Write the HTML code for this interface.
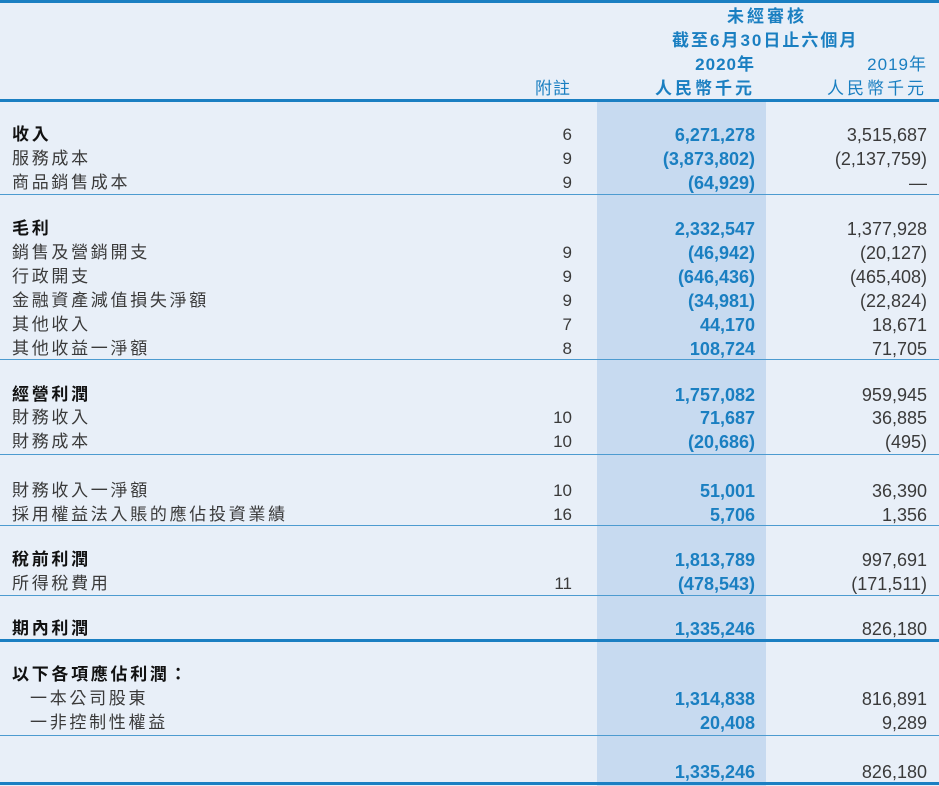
<!DOCTYPE html>
<html><head><meta charset="utf-8"><style>
*{margin:0;padding:0}
body{width:939px;height:786px;background:#e8eff8;position:relative;overflow:hidden;font-family:"Liberation Sans","Noto Sans CJK TC",sans-serif;}
.hl{position:absolute;left:597px;top:102px;width:169px;height:684px;background:#c7daf0}
.ln{position:absolute;left:0;width:939px;background:#1b7fc2}
.t{position:absolute;font-size:17px;line-height:20px;white-space:nowrap;color:#3a3a3a;top:0}
.lab{left:12px;letter-spacing:2.7px}
.b{font-weight:bold;color:#111}
.n{right:367px;text-align:right}
.a{right:184px;text-align:right;font-weight:bold;color:#1a7fc1;font-size:18px}
.c{right:12px;text-align:right;font-size:18px}
.h{color:#1a7fc1;letter-spacing:1px}
</style></head><body>
<div class="hl"></div>
<div class="ln" style="top:0;height:3px"></div>
<div class="ln" style="top:99px;height:3px"></div>
<div class="ln" style="top:194px;height:1px;background:#4d9bd0"></div>
<div class="ln" style="top:359px;height:1px;background:#4d9bd0"></div>
<div class="ln" style="top:454px;height:1px;background:#4d9bd0"></div>
<div class="ln" style="top:525px;height:1px;background:#4d9bd0"></div>
<div class="ln" style="top:595px;height:1px;background:#4d9bd0"></div>
<div class="ln" style="top:639px;height:3px"></div>
<div class="ln" style="top:735px;height:1px;background:#4d9bd0"></div>
<div class="ln" style="top:782px;height:3px"></div>

<div class="t h b" style="left:727px;top:7px;color:#1a7fc1;letter-spacing:3px">未經審核</div>
<div class="t h b" style="left:672px;top:31px;color:#1a7fc1;letter-spacing:2px">截至6月30日止六個月</div>
<div class="t h b" style="right:184px;top:55px;color:#1a7fc1">2020年</div>
<div class="t h" style="right:12px;top:55px">2019年</div>
<div class="t h" style="left:535px;top:79px">附註</div>
<div class="t h b" style="right:184px;top:79px;color:#1a7fc1;letter-spacing:3px">人民幣千元</div>
<div class="t h" style="right:12px;top:79px;letter-spacing:3px">人民幣千元</div>

<div class="t lab b" style="top:125px">收入</div><div class="t n" style="top:125px">6</div><div class="t a" style="top:125px">6,271,278</div><div class="t c" style="top:125px">3,515,687</div>
<div class="t lab" style="top:149px">服務成本</div><div class="t n" style="top:149px">9</div><div class="t a" style="top:149px">(3,873,802)</div><div class="t c" style="top:149px">(2,137,759)</div>
<div class="t lab" style="top:173px">商品銷售成本</div><div class="t n" style="top:173px">9</div><div class="t a" style="top:173px">(64,929)</div><div class="t c" style="top:173px">—</div>

<div class="t lab b" style="top:219px">毛利</div><div class="t a" style="top:219px">2,332,547</div><div class="t c" style="top:219px">1,377,928</div>
<div class="t lab" style="top:243px">銷售及營銷開支</div><div class="t n" style="top:243px">9</div><div class="t a" style="top:243px">(46,942)</div><div class="t c" style="top:243px">(20,127)</div>
<div class="t lab" style="top:267px">行政開支</div><div class="t n" style="top:267px">9</div><div class="t a" style="top:267px">(646,436)</div><div class="t c" style="top:267px">(465,408)</div>
<div class="t lab" style="top:291px">金融資產減值損失淨額</div><div class="t n" style="top:291px">9</div><div class="t a" style="top:291px">(34,981)</div><div class="t c" style="top:291px">(22,824)</div>
<div class="t lab" style="top:315px">其他收入</div><div class="t n" style="top:315px">7</div><div class="t a" style="top:315px">44,170</div><div class="t c" style="top:315px">18,671</div>
<div class="t lab" style="top:339px">其他收益一淨額</div><div class="t n" style="top:339px">8</div><div class="t a" style="top:339px">108,724</div><div class="t c" style="top:339px">71,705</div>

<div class="t lab b" style="top:385px">經營利潤</div><div class="t a" style="top:385px">1,757,082</div><div class="t c" style="top:385px">959,945</div>
<div class="t lab" style="top:408px">財務收入</div><div class="t n" style="top:408px">10</div><div class="t a" style="top:408px">71,687</div><div class="t c" style="top:408px">36,885</div>
<div class="t lab" style="top:432px">財務成本</div><div class="t n" style="top:432px">10</div><div class="t a" style="top:432px">(20,686)</div><div class="t c" style="top:432px">(495)</div>

<div class="t lab" style="top:481px">財務收入一淨額</div><div class="t n" style="top:481px">10</div><div class="t a" style="top:481px">51,001</div><div class="t c" style="top:481px">36,390</div>
<div class="t lab" style="top:505px">採用權益法入賬的應佔投資業績</div><div class="t n" style="top:505px">16</div><div class="t a" style="top:505px">5,706</div><div class="t c" style="top:505px">1,356</div>

<div class="t lab b" style="top:550px">稅前利潤</div><div class="t a" style="top:550px">1,813,789</div><div class="t c" style="top:550px">997,691</div>
<div class="t lab" style="top:574px">所得稅費用</div><div class="t n" style="top:574px">11</div><div class="t a" style="top:574px">(478,543)</div><div class="t c" style="top:574px">(171,511)</div>

<div class="t lab b" style="top:619px">期內利潤</div><div class="t a" style="top:619px">1,335,246</div><div class="t c" style="top:619px">826,180</div>

<div class="t lab b" style="top:665px">以下各項應佔利潤：</div>
<div class="t lab" style="top:689px;left:30px">一本公司股東</div><div class="t a" style="top:689px">1,314,838</div><div class="t c" style="top:689px">816,891</div>
<div class="t lab" style="top:713px;left:30px">一非控制性權益</div><div class="t a" style="top:713px">20,408</div><div class="t c" style="top:713px">9,289</div>

<div class="t a" style="top:762px">1,335,246</div><div class="t c" style="top:762px">826,180</div>
</body></html>
